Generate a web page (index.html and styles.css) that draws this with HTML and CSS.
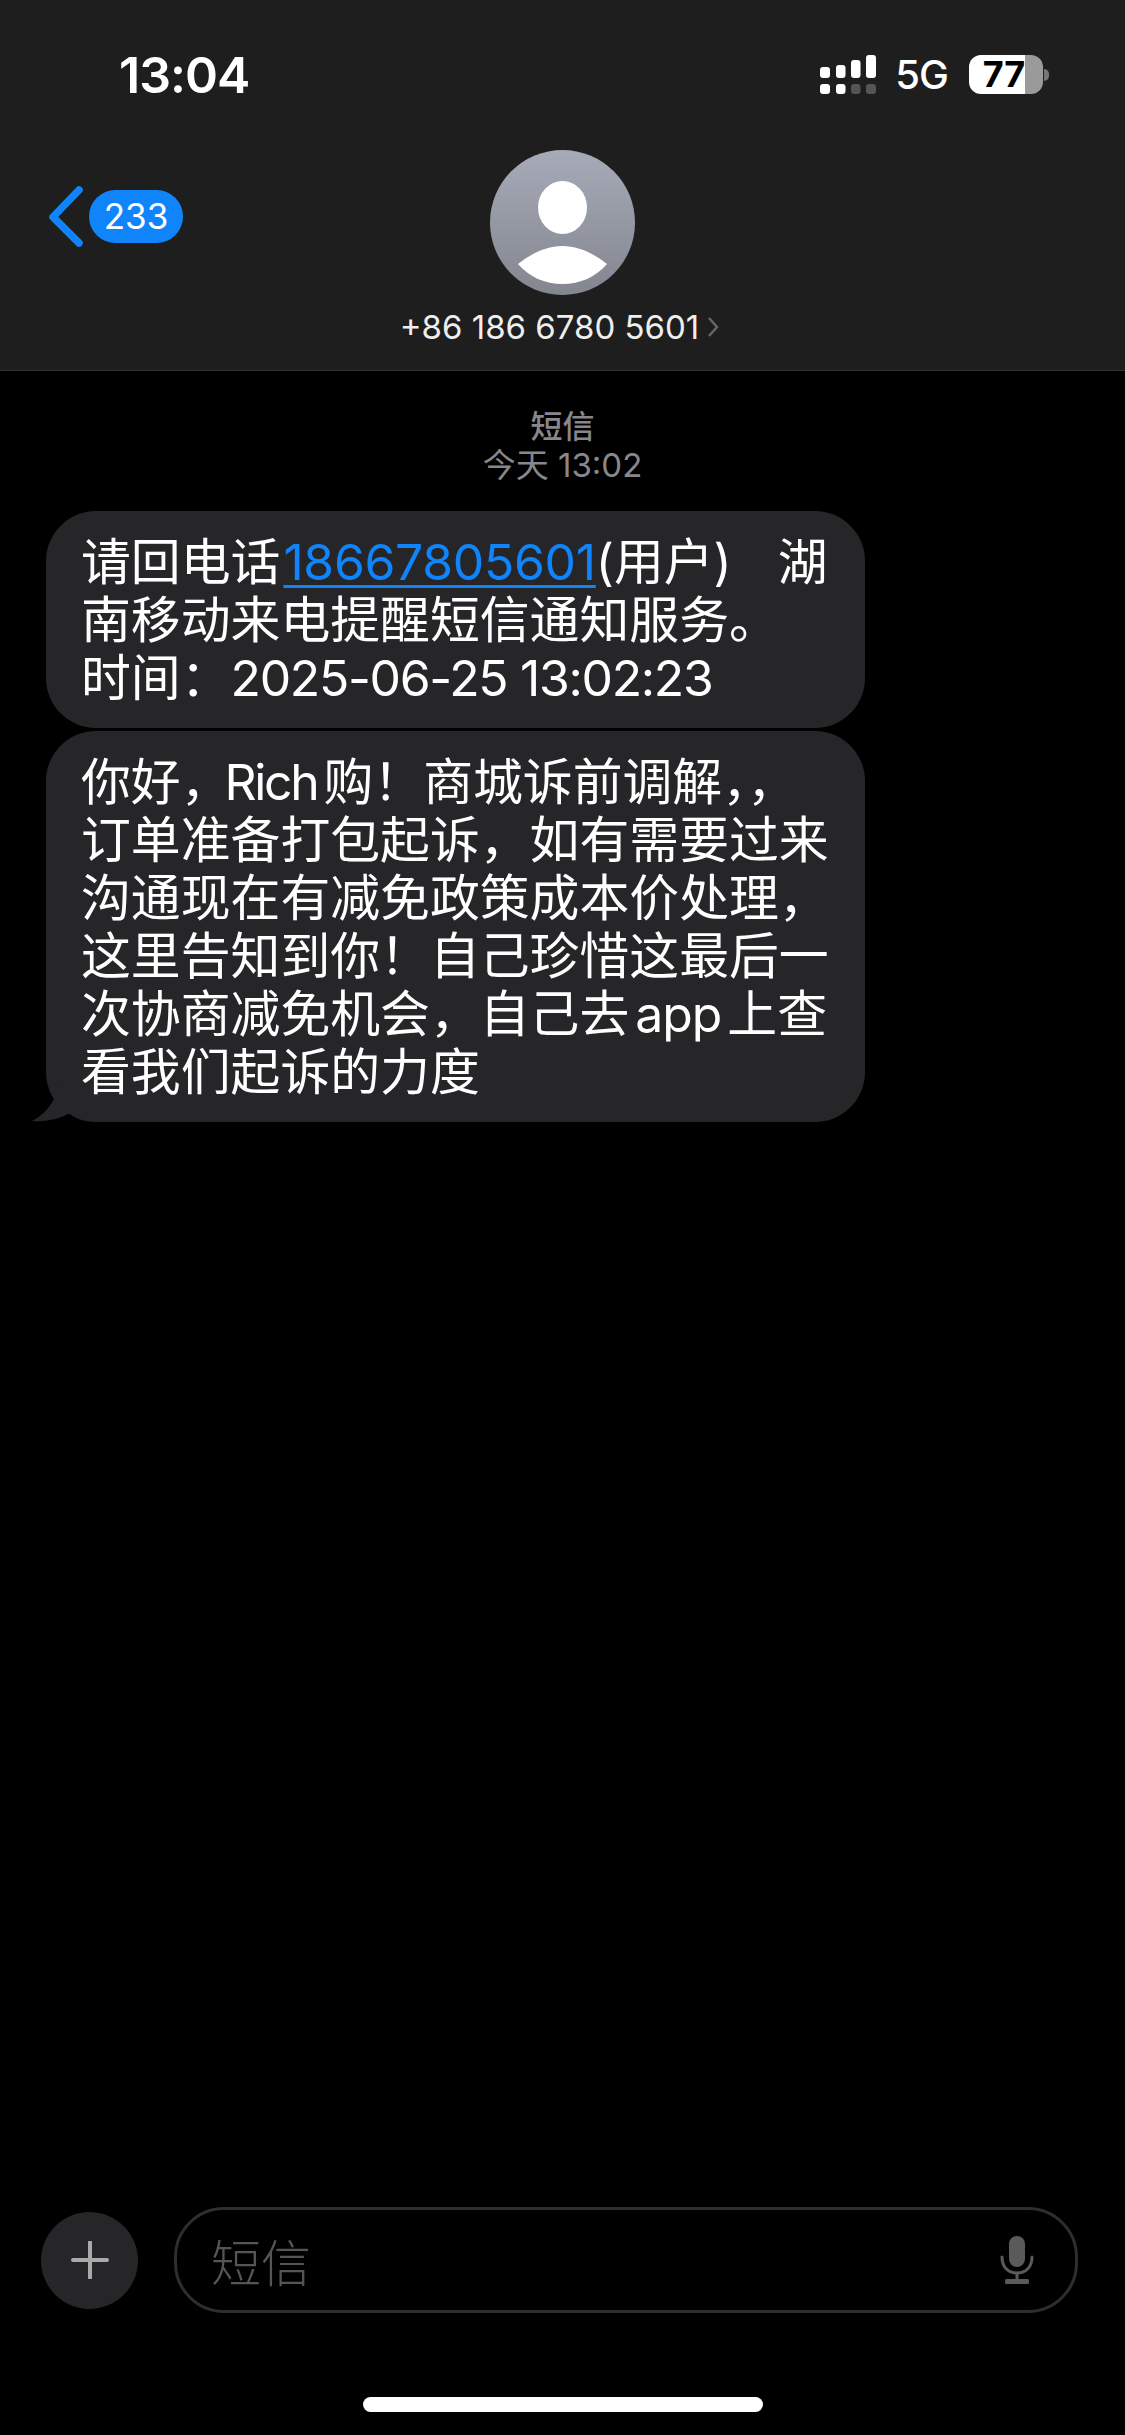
FILE: index.html
```html
<!DOCTYPE html>
<html lang="zh-CN">
<head>
    <meta charset="UTF-8">
    <meta name="viewport" content="width=device-width, initial-scale=1.0">
    <title>短信</title>
    <link rel="stylesheet" href="styles.css">
</head>
<body>
    <div class="app">
        <header class="nav">
            <div class="status-bar">
                <span class="time">13:04</span>
                <div class="status-icons">
                    <svg class="signal" width="56" height="39" viewBox="0 0 56 39">
                        <g fill="#fff">
                            <rect x="0" y="12" width="10" height="11" rx="3"/>
                            <rect x="16" y="10" width="9.500" height="13" rx="3"/>
                            <rect x="31" y="5" width="9.500" height="18" rx="3"/>
                            <rect x="46" y="0" width="10" height="23" rx="3"/>
                            <rect x="0" y="29" width="10" height="10" rx="3"/>
                            <rect x="16" y="29" width="9.500" height="10" rx="3"/>
                        </g>
                        <g fill="#555">
                            <rect x="31" y="29" width="9.500" height="10" rx="3"/>
                            <rect x="46" y="29" width="10" height="10" rx="3"/>
                        </g>
                    </svg>
                    <span class="network">5G</span>
                    <div class="battery"><span class="battery-level">77</span></div>
                    <span class="battery-nub"></span>
                </div>
            </div>
            <div class="contact-row">
                <a class="back">
                    <svg width="36" height="62" viewBox="0 0 36 62">
                        <path d="M30 5 L4 32 L30 58" fill="none" stroke="#0f84fb" stroke-width="7.500" stroke-linecap="round" stroke-linejoin="round"/>
                    </svg>
                    <span class="badge">233</span>
                </a>
                <div class="contact">
                    <svg class="avatar" width="145" height="145" viewBox="0 0 145 145">
                        <defs>
                            <linearGradient id="avatar-bg" x1="0" y1="0" x2="0" y2="1">
                                <stop offset="0" stop-color="#a7abb8"/>
                                <stop offset="1" stop-color="#83868f"/>
                            </linearGradient>
                        </defs>
                        <circle cx="72.500" cy="72.500" r="72.500" fill="url(#avatar-bg)"/>
                        <ellipse cx="72.500" cy="57.500" rx="24.500" ry="26.500" fill="#fff"/>
                        <path d="M28 114 C42 103 57 96 72.500 96 C88 96 103 103 117 114 C106 127 90 134 72.500 134 C55 134 39 127 28 114 Z" fill="#fff"/>
                    </svg>
                    <div class="contact-name">
                        <span>+86 186 6780 5601</span>
                        <svg width="12" height="22" viewBox="0 0 12 22">
                            <path d="M2 2 L10 11 L2 20" fill="none" stroke="#666" stroke-width="2.500"/>
                        </svg>
                    </div>
                </div>
            </div>
        </header>

        <main class="thread">
            <div class="thread-meta">
                <div class="meta-title">短信</div>
                <div class="meta-time">今天 13:02</div>
            </div>
            <div class="bubble">请回电话<a class="phone-link">18667805601</a>(用户)<span class="wide-gap"></span>湖<br>南移动来电提醒短信通知服务。<br>时间：<span class="latin-date">2025-06-25 13:02:23</span></div>
            <div class="bubble bubble-last">你好，<span class="latin-name">Rich</span>购！商城诉前调解，，<br>订单准备打包起诉，如有需要过来<br>沟通现在有减免政策成本价处理，<br>这里告知到你！自己珍惜这最后一<br>次协商减免机会，自己去<span class="latin-app">app</span>上查<br>看我们起诉的力度<svg class="bubble-tail" width="40" height="46" viewBox="0 0 40 46"><path d="M28 0 C27 18 18 36 0 45 C12 46 26 44 40 36 Z" fill="#262629"/></svg></div>
        </main>

        <footer class="composer">
            <div class="plus-button">
                <svg width="38" height="38" viewBox="0 0 38 38">
                    <path d="M19 1 V37 M2 19 H36" fill="none" stroke="#aaa" stroke-width="4" stroke-linecap="round"/>
                </svg>
            </div>
            <div class="message-input">
                <span class="placeholder">短信</span>
                <svg width="34" height="48" viewBox="0 0 34 48">
                    <rect x="9" y="0" width="16" height="31" rx="8" fill="#5a5a5a"/>
                    <path d="M2 21 C2 31 8 37 17 37 C26 37 32 31 32 21 M17 37 V44" fill="none" stroke="#5a5a5a" stroke-width="3" stroke-linecap="round"/>
                    <rect x="5" y="43" width="24" height="5" rx="1.500" fill="#5a5a5a"/>
                </svg>
            </div>
        </footer>
        <div class="home-bar"></div>
    </div>
</body>
</html>
```

FILE: styles.css
```css
* {
    box-sizing: border-box;
}
body {
    margin: 0;
    background-color: #000;
    color: #fff;
    font-family: Inter, "Noto Sans CJK SC", sans-serif;
}
.app {
    width: 1125px;
    height: 2435px;
    display: flex;
    flex-direction: column;
    overflow: hidden;
}
.nav {
    height: 371px;
    padding: 55px 49px 0;
    background-color: #1e1e1e;
    border-bottom: 1px solid #333;
}
.status-bar {
    display: flex;
    justify-content: space-between;
    align-items: center;
    height: 39px;
    padding-left: 70px;
    padding-right: 27px;
}
.time {
    font-size: 50px;
    font-weight: 600;
    letter-spacing: -1px;
}
.status-icons {
    display: flex;
    align-items: center;
}
.network {
    margin-left: 19px;
    font-size: 40px;
    font-weight: 500;
    letter-spacing: -1px;
}
.battery {
    width: 74px;
    height: 39px;
    margin-left: 21px;
    border-radius: 12px;
    background: linear-gradient(to right, #fff 56px, #9a9a9a 56px);
    color: #000;
    text-align: center;
}
.battery-level {
    display: block;
    padding-right: 4px;
    font-size: 36px;
    font-weight: 700;
    line-height: 39px;
}
.battery-nub {
    width: 5px;
    height: 12px;
    margin-left: 1px;
    border-radius: 0 6px 6px 0;
    background-color: #777;
}
.contact-row {
    display: grid;
    grid-template-columns: 1fr auto 1fr;
    margin-top: 56px;
}
.back {
    display: flex;
    align-items: center;
    align-self: start;
    height: 62px;
    margin-top: 35px;
}
.badge {
    width: 94px;
    height: 53px;
    margin-left: 4px;
    border-radius: 27px;
    background-color: #0f84fb;
    font-size: 35px;
    line-height: 53px;
    text-align: center;
}
.contact {
    display: flex;
    flex-direction: column;
    align-items: center;
}
.avatar {
    display: block;
}
.contact-name {
    display: flex;
    align-items: center;
    gap: 8px;
    height: 40px;
    margin-top: 12px;
    margin-right: 6px;
    color: #eee;
    font-size: 33px;
    white-space: nowrap;
}
.thread {
    flex: 1;
    padding: 36px 0 0 46px;
}
.thread-meta {
    width: 1033px;
    margin-bottom: 26px;
    color: #87878c;
    font-size: 32px;
    line-height: 39px;
    text-align: center;
}
.meta-title {
    font-weight: 500;
}
.meta-time {
    font-size: 33px;
}
.bubble {
    position: relative;
    width: 819px;
    margin-bottom: 3px;
    padding: 22px 0 21px 35px;
    border-radius: 50px;
    background-color: #262629;
    font-size: 49.850px;
    font-weight: 400;
    line-height: 58px;
    white-space: nowrap;
}
.phone-link {
    margin-left: 3px;
    color: #0f84fb;
    letter-spacing: -0.300px;
    text-decoration: underline;
    text-decoration-thickness: 3px;
    text-underline-offset: 5px;
}
.wide-gap {
    display: inline-block;
    width: 46px;
}
.latin-date {
    letter-spacing: -1.300px;
}
.latin-name {
    margin-left: -6px;
    margin-right: 6px;
    letter-spacing: -2.300px;
}
.latin-app {
    margin: 0 6px;
    letter-spacing: -1px;
}
.bubble-tail {
    position: absolute;
    left: -14px;
    bottom: 0;
}
.composer {
    display: flex;
    align-items: center;
    gap: 36px;
    padding: 0 47px 0 41px;
}
.plus-button {
    display: flex;
    align-items: center;
    justify-content: center;
    width: 97px;
    height: 97px;
    border-radius: 50%;
    background-color: #262628;
}
.message-input {
    flex: 1;
    display: flex;
    align-items: center;
    justify-content: space-between;
    height: 106px;
    padding: 0 41px 0 34px;
    border: 3px solid #2e2e2e;
    border-radius: 50px;
}
.placeholder {
    color: #555;
    font-size: 50px;
    font-weight: 300;
}
.home-bar {
    width: 400px;
    height: 15px;
    margin: 84px auto 23px;
    border-radius: 8px;
    background-color: #fff;
}
```
